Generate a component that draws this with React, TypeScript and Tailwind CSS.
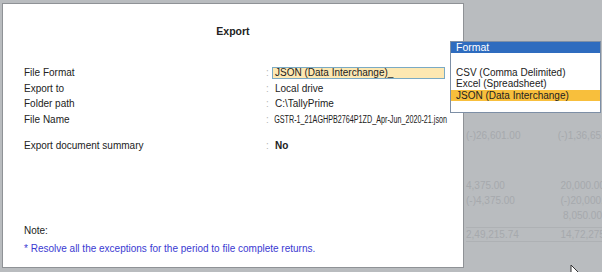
import React from 'react';

const rows = [
  { label: 'File Format', value: 'JSON (Data Interchange)', kind: 'input' },
  { label: 'Export to', value: 'Local drive', kind: 'text' },
  { label: 'Folder path', value: 'C:\\TallyPrime', kind: 'text' },
  { label: 'File Name', value: 'GSTR-1_21AGHPB2764P1ZD_Apr-Jun_2020-21.json', kind: 'narrow' },
];

const formats = ['CSV (Comma Delimited)', 'Excel (Spreadsheet)', 'JSON (Data Interchange)'];

// faint report figures behind the dialog
const ledger = [
  { a: '(-)26,601.00', b: '(-)1,36,651.00', gap: 'mt-[128px]' },
  { a: '4,375.00', b: '20,000.00', gap: 'mt-[35px]' },
  { a: '(-)4,375.00', b: '(-)20,000.00', gap: '' },
  { a: '', b: '8,050.00', gap: '' },
  { a: '2,49,215.74', b: '14,72,275.00', gap: 'mt-[4px]', total: true },
];

const App: React.FC = () => {
  return (
    <div
      className="relative w-[602px] h-[272px] overflow-hidden bg-[#b9bcbf] text-[10px] text-[#222]"
      style={{ fontFamily: '"Liberation Sans", Arial, sans-serif' }}
    >
      {/* Background report (dimmed) */}
      <div className="flex flex-col pl-[466px] text-[#a6a9ad]">
        {ledger.map((r, i) => (
          <div
            key={i}
            className={`flex h-[15px] items-center ${r.gap} ${r.total ? 'border-y border-[#aeb1b4]' : ''}`}
          >
            <span className="w-[56px] text-right">{r.a}</span>
            <span className="w-[100px] shrink-0 text-right">{r.b}</span>
          </div>
        ))}
      </div>

      {/* Export dialog */}
      <div className="absolute left-[2px] top-[3px] w-[462px] h-[265px] bg-white border border-[#8f9296] flex flex-col pl-[21px]">
        <div className="text-center font-bold text-[10.5px] leading-[12px] mt-[21px] pr-[21px]">Export</div>

        <div className="flex flex-col mt-[28px]">
          {rows.map((r) => (
            <div key={r.label} className="flex items-center h-[15.6px]">
              <span className="w-[242px] shrink-0">{r.label}</span>
              <span className="w-[6px] shrink-0 text-[#b5b5b5]">:</span>
              {r.kind === 'input' ? (
                <span className="w-[173px] h-[12px] flex items-center bg-[#fde8b2] border border-[#7aaac4] pl-[2px] leading-[10px]">
                  {r.value}_
                </span>
              ) : r.kind === 'narrow' ? (
                <span className="pl-[3px] inline-block origin-left scale-x-[0.72] whitespace-nowrap">{r.value}</span>
              ) : (
                <span className="pl-[3px]">{r.value}</span>
              )}
            </div>
          ))}
          <div className="flex items-center h-[15.6px] mt-[10.5px]">
            <span className="w-[242px] shrink-0">Export document summary</span>
            <span className="w-[6px] shrink-0 text-[#b5b5b5]">:</span>
            <span className="pl-[3px] font-bold">No</span>
          </div>
        </div>

        <div className="mt-auto mb-[11px] flex flex-col gap-[2.5px]">
          <div className="h-[15.5px] flex items-center">Note:</div>
          <div className="h-[15.5px] flex items-center text-[#3a3ad2]">
            * Resolve all the exceptions for the period to file complete returns.
          </div>
        </div>
      </div>

      {/* Format picker */}
      <div className="absolute left-[450px] top-[41px] w-[151px] h-[72px] bg-white border border-[#7d8fa6] flex flex-col">
        <div className="h-[11px] bg-[#2e6cbf] text-white text-[10.5px] leading-[11px] pl-[5px]">Format</div>
        <div className="flex flex-col pt-[13.5px]">
          {formats.map((f, i) => (
            <div
              key={f}
              className={`h-[11.5px] leading-[11.5px] pl-[5px] ${i === 2 ? 'bg-[#f8bf3c]' : ''}`}
            >
              {f}
            </div>
          ))}
        </div>
      </div>

      {/* Mouse pointer */}
      <svg className="absolute left-[570px] top-[264px]" width="12" height="18" viewBox="0 0 12 18">
        <path d="M1 1 L1 14 L4 11 L6.5 16.5 L8.5 15.5 L6 10 L10 10 Z" fill="#fff" stroke="#333" strokeWidth="1" />
      </svg>
    </div>
  );
};

export default App;
